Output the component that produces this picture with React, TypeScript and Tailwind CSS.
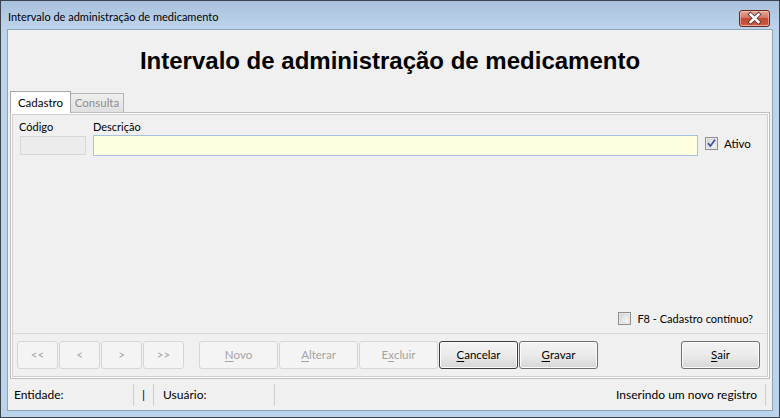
import React from "react";

function CloseButton() {
  return (
    <svg width="31" height="17" viewBox="0 0 31 17" className="block">
      <defs>
        <linearGradient id="cg" x1="0" y1="0" x2="0" y2="1">
          <stop offset="0" stopColor="#e9aa9c" />
          <stop offset="0.45" stopColor="#d47564" />
          <stop offset="0.5" stopColor="#c44a35" />
          <stop offset="0.85" stopColor="#c8533a" />
          <stop offset="1" stopColor="#dd8b6c" />
        </linearGradient>
      </defs>
      <rect x="0.5" y="0.5" width="30" height="16" rx="2.5" fill="url(#cg)" stroke="#6a2a24" />
      <rect x="1.5" y="1.5" width="28" height="14" rx="1.8" fill="none" stroke="#f3c9bd" strokeOpacity="0.6" />
      <path d="M11.5 4.5 L19.5 12 M19.5 4.5 L11.5 12" stroke="#5b3a38" strokeWidth="4.2" strokeLinecap="square" />
      <path d="M11.5 4.5 L19.5 12 M19.5 4.5 L11.5 12" stroke="#ffffff" strokeWidth="2.4" strokeLinecap="square" />
    </svg>
  );
}

function CheckBox({ checked }: { checked: boolean }) {
  const id = checked ? "cbg1" : "cbg2";
  return (
    <svg width="13" height="13" viewBox="0 0 13 13" className="block">
      <defs>
        <linearGradient id={id} x1="0" y1="0" x2="1" y2="1">
          <stop offset="0" stopColor="#d6d6d6" />
          <stop offset="1" stopColor="#fbfbfb" />
        </linearGradient>
      </defs>
      <rect x="0.5" y="0.5" width="12" height="12" fill="#f4f4f4" stroke="#8f8f8f" />
      <rect x="2" y="2" width="9" height="9" fill={`url(#${id})`} stroke="#c9c9c9" strokeWidth="0.6" />
      {checked && (
        <path d="M3 6.2 L5.4 9 L10 2.8" fill="none" stroke="#3d5a9a" strokeWidth="1.8" />
      )}
    </svg>
  );
}

function Btn({
  children,
  w,
  enabled,
  dark,
}: {
  children: React.ReactNode;
  w: string;
  enabled?: boolean;
  dark?: boolean;
}) {
  if (enabled) {
    return (
      <div
        className={`${w} h-[28px] rounded-[3px] border ${
          dark ? "border-[#3c3c3c]" : "border-[#707070]"
        } bg-gradient-to-b from-[#f3f3f3] via-[#ebebeb] to-[#d6d6d6] flex items-center justify-center text-[11.5px] text-black shadow-[inset_0_0_0_1px_#fbfbfb]`}
      >
        {children}
      </div>
    );
  }
  return (
    <div
      className={`${w} h-[28px] rounded-[3px] border border-[#d6d6d6] bg-[#f4f4f4] flex items-center justify-center text-[11.5px] text-[#a3a3a3]`}
    >
      {children}
    </div>
  );
}

export default function App() {
  return (
    <div className="w-[780px] h-[418px] border border-[#3a4550] bg-[#bcd3ec] flex flex-col font-['Lato',sans-serif] overflow-hidden">
      {/* Title bar */}
      <div className="h-[28px] flex items-start justify-between bg-gradient-to-b from-[#a9c1dd] to-[#bed4ec]">
        <span className="pl-[7px] pt-[9px] text-[11px] leading-[14px] text-black">
          Intervalo de administração de medicamento
        </span>
        <div className="mt-[9px] mr-[9px]">
          <CloseButton />
        </div>
      </div>

      {/* Client */}
      <div className="mx-[6px] mb-[6px] flex-1 border border-[#8ea4bd] bg-[#f0f0f0] flex flex-col">
        <div className="h-[61px] flex items-center justify-center">
          <span className="font-['Liberation_Sans',Arial,sans-serif] font-bold text-[24px] text-black">
            Intervalo de administração de medicamento
          </span>
        </div>

        {/* Tabs */}
        <div className="px-[2px] flex items-end h-[21px] relative z-10">
          <div className="w-[61px] h-[22px] -mb-px border border-b-0 border-[#a8a8a8] bg-white flex items-center justify-center text-[11.5px] text-black">
            Cadastro
          </div>
          <div className="w-[53px] h-[19px] border border-l-0 border-b-0 border-[#b4b4b4] bg-gradient-to-b from-[#efefef] to-[#e0e0e0] flex items-center justify-center text-[11.5px] text-[#8e8e8e]">
            Consulta
          </div>
        </div>

        {/* Tab panel */}
        <div className="mx-[2px] h-[267px] border border-[#bdbdbd] bg-white p-px">
          <div className="h-full border border-[#cfcfcf] bg-[#f0f0f0] flex flex-col">
            <div className="flex-1 flex flex-col">
              <div className="flex pt-[4px] pl-[6px]">
                <div className="w-[67px] flex flex-col">
                  <span className="h-[16px] text-[11px] leading-[15px] text-black">Código</span>
                  <div className="mt-[1px] ml-px w-[66px] h-[19px] border border-[#d6d6d6] bg-[#ececec]" />
                </div>
                <div className="ml-[7px] w-[605px] flex flex-col">
                  <span className="h-[16px] text-[11px] leading-[15px] text-black">Descrição</span>
                  <div className="w-[605px] h-[21px] border border-[#a8c1dc] bg-[#ffffe1]" />
                </div>
                <div className="ml-[7px] mt-[18px] flex items-start">
                  <CheckBox checked />
                  <span className="ml-[6px] -mt-[1px] text-[11.5px] leading-[15px] text-black">Ativo</span>
                </div>
              </div>
              <div className="flex-1" />
              <div className="flex items-center justify-end pr-[14px] pb-[7px]">
                <CheckBox checked={false} />
                <span className="ml-[6px] text-[11px] leading-[15px] text-black">
                  F8 - Cadastro contínuo?
                </span>
              </div>
            </div>
            <div className="border-t border-[#d6dade] h-[43px] flex items-center pl-[4px] pr-[7px]">
              <div className="flex gap-px">
                <Btn w="w-[41px]">&lt;&lt;</Btn>
                <Btn w="w-[41px]">&lt;</Btn>
                <Btn w="w-[41px]">&gt;</Btn>
                <Btn w="w-[41px]">&gt;&gt;</Btn>
              </div>
              <div className="ml-[15px] flex gap-px">
                <Btn w="w-[79px]">
                  <span className="underline underline-offset-2">N</span>ovo
                </Btn>
                <Btn w="w-[79px]">
                  <span className="underline underline-offset-2">A</span>lterar
                </Btn>
                <Btn w="w-[79px]">
                  E<span className="underline underline-offset-2">x</span>cluir
                </Btn>
                <Btn w="w-[79px]" enabled dark>
                  <span className="underline underline-offset-2">C</span>ancelar
                </Btn>
                <Btn w="w-[79px]" enabled>
                  <span className="underline underline-offset-2">G</span>ravar
                </Btn>
              </div>
              <div className="flex-1" />
              <Btn w="w-[79px]" enabled>
                <span className="underline underline-offset-2">S</span>air
              </Btn>
            </div>
          </div>
        </div>

        {/* Status bar */}
        <div className="flex-1 flex items-center text-[12px] text-black">
          <div className="w-[125px] pl-[6px]">Entidade:</div>
          <div className="h-[22px] w-px bg-[#cfcfcf]" />
          <div className="w-[19px] flex justify-center">|</div>
          <div className="h-[22px] w-px bg-[#cfcfcf]" />
          <div className="w-[120px] pl-[9px]">Usuário:</div>
          <div className="h-[22px] w-px bg-[#cfcfcf]" />
          <div className="flex-1 text-right pr-[8px]">Inserindo um novo registro</div>
          <div className="h-[22px] w-px bg-[#cfcfcf]" />
          <div className="w-[6px]" />
        </div>
      </div>
    </div>
  );
}
